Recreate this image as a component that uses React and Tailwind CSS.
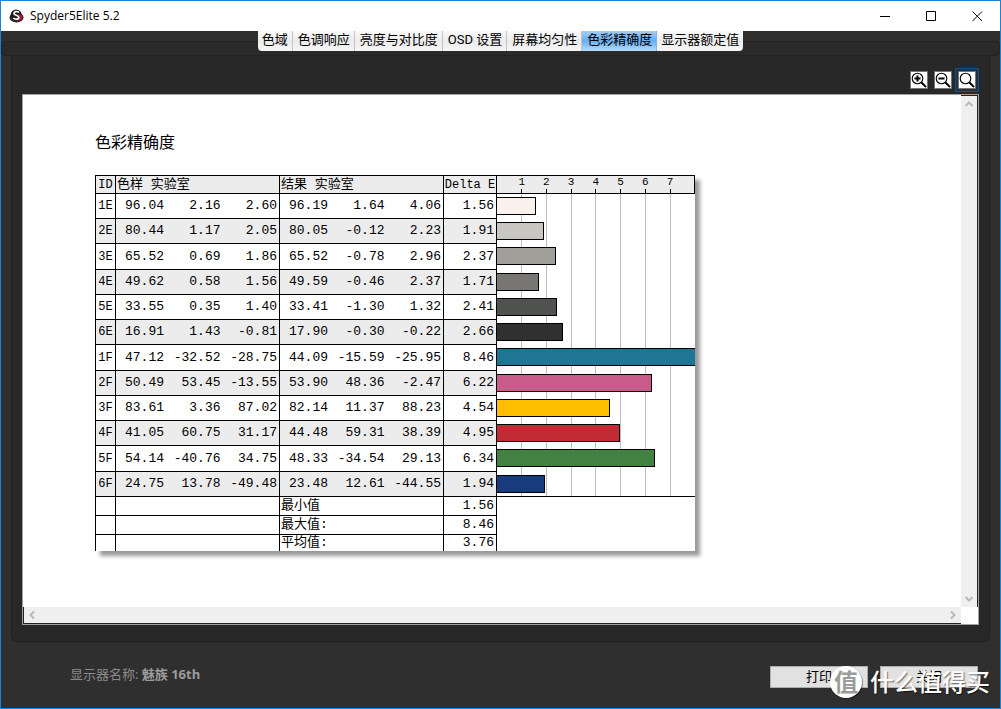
import { useState } from "react";

const tabs = ["色域", "色调响应", "亮度与对比度", "OSD 设置", "屏幕均匀性", "色彩精确度", "显示器额定值"];

const rows = [
  { id: "1E", sample: ["96.04", "2.16", "2.60"], result: ["96.19", "1.64", "4.06"], delta: 1.56, color: "bg-[#fbf1ec]", height: "h-[25px]" },
  { id: "2E", sample: ["80.44", "1.17", "2.05"], result: ["80.05", "-0.12", "2.23"], delta: 1.91, color: "bg-[#c7c6c1]", height: "h-[25px]" },
  { id: "3E", sample: ["65.52", "0.69", "1.86"], result: ["65.52", "-0.78", "2.96"], delta: 2.37, color: "bg-[#a09f9a]", height: "h-[26px]" },
  { id: "4E", sample: ["49.62", "0.58", "1.56"], result: ["49.59", "-0.46", "2.37"], delta: 1.71, color: "bg-[#787672]", height: "h-[25px]" },
  { id: "5E", sample: ["33.55", "0.35", "1.40"], result: ["33.41", "-1.30", "1.32"], delta: 2.41, color: "bg-[#50524f]", height: "h-[25px]" },
  { id: "6E", sample: ["16.91", "1.43", "-0.81"], result: ["17.90", "-0.30", "-0.22"], delta: 2.66, color: "bg-[#303031]", height: "h-[25px]" },
  { id: "1F", sample: ["47.12", "-32.52", "-28.75"], result: ["44.09", "-15.59", "-25.95"], delta: 8.46, color: "bg-[#1f7594]", height: "h-[26px]" },
  { id: "2F", sample: ["50.49", "53.45", "-13.55"], result: ["53.90", "48.36", "-2.47"], delta: 6.22, color: "bg-[#c85b89]", height: "h-[25px]" },
  { id: "3F", sample: ["83.61", "3.36", "87.02"], result: ["82.14", "11.37", "88.23"], delta: 4.54, color: "bg-[#ffbf00]", height: "h-[25px]" },
  { id: "4F", sample: ["41.05", "60.75", "31.17"], result: ["44.48", "59.31", "38.39"], delta: 4.95, color: "bg-[#c22b34]", height: "h-[25px]" },
  { id: "5F", sample: ["54.14", "-40.76", "34.75"], result: ["48.33", "-34.54", "29.13"], delta: 6.34, color: "bg-[#418243]", height: "h-[26px]" },
  { id: "6F", sample: ["24.75", "13.78", "-49.48"], result: ["23.48", "12.61", "-44.55"], delta: 1.94, color: "bg-[#183b7b]", height: "h-[25px]" },
];

const summary = [
  { label: "最小值", value: "1.56", height: "h-[19px]" },
  { label: "最大值:", value: "8.46", height: "h-[19px]" },
  { label: "平均值:", value: "3.76", height: "h-[17px]" },
];

const ticks = [1, 2, 3, 4, 5, 6, 7];
const MAX_DELTA = 7.97;

const toPercent = (value) => `${Math.min((value / MAX_DELTA) * 100, 100)}%`;

const cell = "border-t border-l border-black p-0";
const mono = "font-['Liberation_Mono','Noto_Sans_CJK_SC',monospace]";

const Logo = () => (
  <svg width="15" height="14" viewBox="0 0 15 14" aria-hidden="true">
    <ellipse cx="7.5" cy="8.5" rx="7" ry="5" fill="#2b2728" />
    <circle cx="7.2" cy="6" r="5.5" fill="#1d1a1b" />
    <path d="M9.500 5L13.500 6.500L13 10.500L8 12L9.500 9Z" fill="#b3132c" />
    <path d="M10 3.500C8.500 2 5 2.200 5 4.400C5 6.600 9.800 6 9.800 8.400C9.800 10.600 6 10.600 4.300 9" fill="none" stroke="#fff" strokeWidth="1.700" />
  </svg>
);

const Magnifier = ({ children }) => (
  <svg width="16" height="16" viewBox="0 0 16 16" fill="none" stroke="#000" aria-hidden="true">
    <circle cx="6.500" cy="6.500" r="5.300" strokeWidth="1.100" />
    <path d="M10.500 10.500L15 15" strokeWidth="2" />
    {children}
  </svg>
);

const ToolButton = ({ label, active, onClick, children }) => (
  <button
    type="button"
    aria-label={label}
    onClick={onClick}
    className={`border p-0.5 ${active ? "border-[#135088] bg-[#1f3345]" : "border-transparent"}`}
  >
    <span className="block border border-[#777] bg-white">{children}</span>
  </button>
);

const Arrow = ({ label, d }) => (
  <button type="button" aria-label={label} className="flex h-4 w-4 items-center justify-center">
    <svg width="10" height="10" viewBox="0 0 10 10" fill="none" stroke="#b9b9b9" strokeWidth="2" aria-hidden="true">
      <path d={d} />
    </svg>
  </button>
);

const LabValues = ({ values }) => (
  <div className="grid grid-cols-[48px_1fr_1fr] pr-0.5 text-right">
    {values.map((value, i) => (
      <span key={i}>{value}</span>
    ))}
  </div>
);

const AccuracyTable = () => (
  <table className={`w-[600px] table-fixed border-separate border-spacing-0 bg-white text-[13px] leading-4 text-black shadow-[5px_5px_4px_rgba(0,0,0,0.4)] ${mono}`}>
    <colgroup>
      <col className="w-5" />
      <col className="w-[164px]" />
      <col className="w-[164px]" />
      <col className="w-[53px]" />
      <col />
    </colgroup>
    <thead>
      <tr className="h-[18px] bg-[#ececec] text-left">
        <th className={`${cell} text-center text-xs font-normal`}>ID</th>
        <th className={`${cell} pl-px font-normal`}>色样 实验室</th>
        <th className={`${cell} pl-px font-normal`}>结果 实验室</th>
        <th className={`${cell} text-center text-xs font-normal whitespace-nowrap`}>Delta E</th>
        <th className={`${cell} relative border-r font-normal`}>
          {ticks.map((tick) => (
            <span
              key={tick}
              className="absolute top-0 flex h-full w-4 -translate-x-1/2 flex-col items-center justify-between text-[11px] leading-3"
              style={{ left: toPercent(tick) }}
            >
              {tick}
              <i className="h-1 w-px bg-black" />
            </span>
          ))}
        </th>
      </tr>
    </thead>
    <tbody>
      {rows.map((row, index) => (
        <tr key={row.id} className={`${row.height} ${index % 2 ? "bg-[#ececec]" : "bg-white"}`}>
          <td className={`${cell} text-center text-xs`}>{row.id}</td>
          <td className={cell}><LabValues values={row.sample} /></td>
          <td className={cell}><LabValues values={row.result} /></td>
          <td className={`${cell} pr-0.5 text-right`}>{row.delta.toFixed(2)}</td>
          <td className={`relative border-l border-black bg-white p-0 ${index === 0 ? "border-t" : ""}`}>
            {ticks.map((tick) => (
              <i key={tick} className="absolute inset-y-0 -ml-px w-px bg-[#bdbdbd]" style={{ left: toPercent(tick) }} />
            ))}
            <div
              className={`relative h-[18px] border-y border-black ${row.color} ${row.delta < MAX_DELTA ? "border-r" : ""}`}
              style={{ width: toPercent(row.delta) }}
            />
          </td>
        </tr>
      ))}
      {summary.map((item, index) => (
        <tr key={item.label} className={item.height}>
          <td className={cell}></td>
          <td className={cell}></td>
          <td className={`${cell} pl-px`}>{item.label}</td>
          <td className={`${cell} pr-0.5 text-right`}>{item.value}</td>
          <td className={`border-l border-black p-0 ${index === 0 ? "border-t" : ""}`}></td>
        </tr>
      ))}
    </tbody>
  </table>
);

const App = () => {
  const [activeTab, setActiveTab] = useState("色彩精确度");
  const [zoom, setZoom] = useState("fit");

  return (
    <div className="relative flex min-h-screen flex-col border border-[#1883d7] bg-[#2f2f2f] font-['Open_Sans','Noto_Sans_CJK_SC',sans-serif] text-[13px]">
      <header className="flex h-[30px] items-center bg-white pl-2 text-black">
        <Logo />
        <h1 className="ml-1.5 flex-1 text-xs">Spyder5Elite 5.2</h1>
        <div className="flex">
          <button type="button" aria-label="最小化" className="flex w-[46px] justify-center">
            <svg width="11" height="11" stroke="#000" fill="none"><path d="M0 5.500H10" /></svg>
          </button>
          <button type="button" aria-label="最大化" className="flex w-[46px] justify-center">
            <svg width="11" height="11" stroke="#000" fill="none"><path d="M.5.5H9.500V9.500H.5Z" /></svg>
          </button>
          <button type="button" aria-label="关闭窗口" className="flex w-[46px] justify-center">
            <svg width="11" height="11" stroke="#000" fill="none"><path d="M.5.5L10 10M10 .5L.5 10" /></svg>
          </button>
        </div>
      </header>

      <nav className="relative flex h-[25px] items-start justify-center font-[Roboto,'Noto_Sans_CJK_SC',sans-serif]">
        <div className="absolute inset-x-0 top-2.5 bottom-0 rounded-sm border border-[#222] bg-[#2a2a2a]" />
        <div className="relative flex overflow-hidden rounded-b-sm">
          {tabs.map((tab) => (
            <button
              key={tab}
              type="button"
              onClick={() => setActiveTab(tab)}
              className={`h-5 border-r px-[5px] pr-1 pb-0.5 leading-[18px] whitespace-nowrap text-black first:pl-1 last:border-r-0 last:pl-1 ${
                activeTab === tab
                  ? "border-[#7db4ea] bg-linear-to-b from-[#a5cdf5] via-[#68acf2] to-[#b5ddfb]"
                  : "border-[#c4c4c4] bg-linear-to-b from-[#fafafa] via-[#ebebeb] to-[#f5f5f5]"
              }`}
            >
              {tab}
            </button>
          ))}
        </div>
      </nav>

      <main className="mx-2.5 flex flex-1 flex-col rounded-b-md border border-t-0 border-[#202020] bg-[#282828] px-2.5 pt-3 pb-4">
        <div className="flex justify-end pb-0.5">
          <ToolButton label="放大" active={zoom === "in"} onClick={() => setZoom("in")}>
            <Magnifier><path d="M3.500 6.500H9.500M6.500 3.500V9.500" strokeWidth="2" /></Magnifier>
          </ToolButton>
          <ToolButton label="缩小" active={zoom === "out"} onClick={() => setZoom("out")}>
            <Magnifier><path d="M3.500 6.500H9.500" strokeWidth="2" /></Magnifier>
          </ToolButton>
          <ToolButton label="适合窗口" active={zoom === "fit"} onClick={() => setZoom("fit")}>
            <Magnifier />
          </ToolButton>
        </div>

        <div className="grid flex-1 grid-cols-[1fr_17px] grid-rows-[1fr_17px] border border-[#a0a0a0] bg-white">
          <section className="px-[72px] pt-[35px] pb-14">
            <h2 className="mb-[21px] text-base leading-6 text-black">色彩精确度</h2>
            <AccuracyTable />
          </section>
          <div className="flex flex-col justify-between border-t border-r border-[#222] bg-[#efefef]">
            <Arrow label="向上滚动" d="M1.500 7L5 3.500L8.500 7" />
            <Arrow label="向下滚动" d="M1.500 3L5 6.500L8.500 3" />
          </div>
          <div className="flex justify-between border-b border-l border-[#222] bg-[#efefef]">
            <Arrow label="向左滚动" d="M7 1.500L3.500 5L7 8.500" />
            <Arrow label="向右滚动" d="M3 1.500L6.500 5L3 8.500" />
          </div>
        </div>
      </main>

      <footer className="flex h-[66px] items-center justify-between pr-[22px] pl-[69px]">
        <p className="text-[#8a8a8a]">
          显示器名称: <strong className="text-[#9c9c9c]">魅族 16th</strong>
        </p>
        <div className="flex gap-3 pt-1">
          <button type="button" className="h-[22px] w-[98px] border border-[#adadad] bg-[#e1e1e1] pb-0.5 leading-[18px] text-black">打印</button>
          <button type="button" className="h-[22px] w-[98px] border border-[#adadad] bg-[#e1e1e1] pb-0.5 leading-[18px] text-black">关闭</button>
        </div>
      </footer>

      <div className="pointer-events-none absolute right-2.5 bottom-2.5 flex items-center gap-2 text-2xl leading-8 font-medium text-white">
        <span className="flex h-8 w-8 items-center justify-center rounded-full bg-white font-bold text-[#9b9b9b] shadow-[1px_1px_1px_rgba(0,0,0,0.4)]">值</span>
        <span className="[text-shadow:1px_1px_1px_rgba(0,0,0,0.5)]">什么值得买</span>
      </div>
    </div>
  );
};

export default App;
